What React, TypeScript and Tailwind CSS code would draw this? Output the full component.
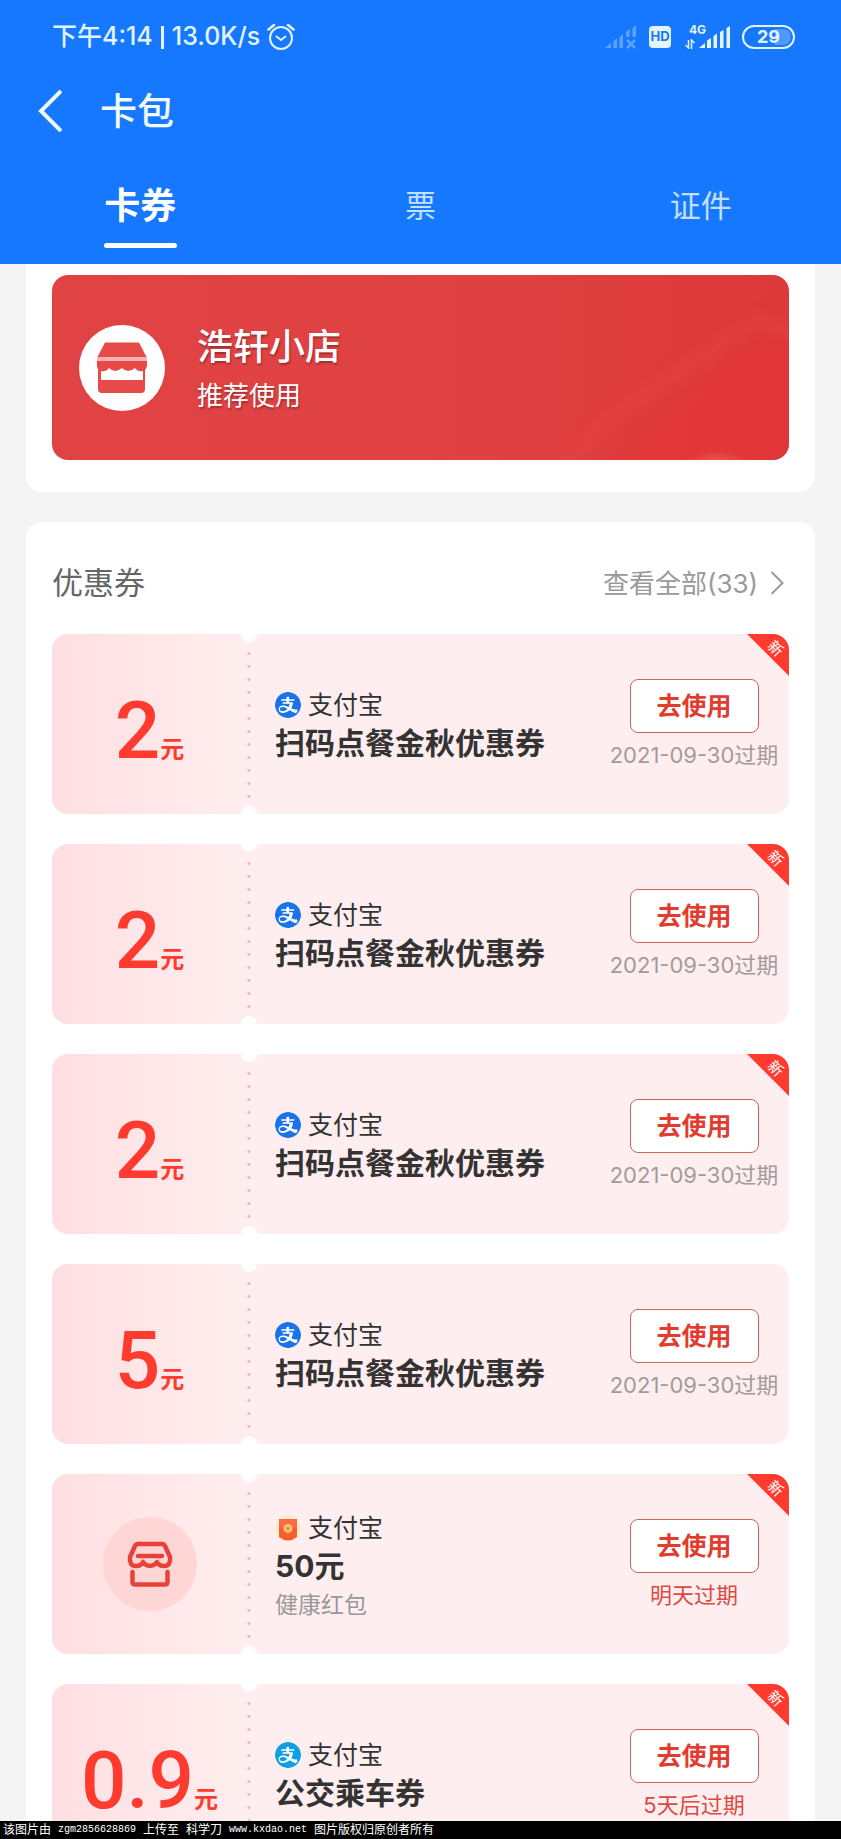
import type { ReactNode } from "react"
import { AiFillAlipayCircle } from "react-icons/ai"

type Brand = "alipay" | "packet" | "alipayLight"

interface Coupon {
  amount?: string
  brand: Brand
  title: string
  note?: string
  expires: string
  urgent?: boolean
  isNew?: boolean
}

const coupons: Coupon[] = [
  { amount: "2", brand: "alipay", title: "扫码点餐金秋优惠券", expires: "2021-09-30过期", isNew: true },
  { amount: "2", brand: "alipay", title: "扫码点餐金秋优惠券", expires: "2021-09-30过期", isNew: true },
  { amount: "2", brand: "alipay", title: "扫码点餐金秋优惠券", expires: "2021-09-30过期", isNew: true },
  { amount: "5", brand: "alipay", title: "扫码点餐金秋优惠券", expires: "2021-09-30过期" },
  { brand: "packet", title: "50元", note: "健康红包", expires: "明天过期", urgent: true, isNew: true },
  { amount: "0.9", brand: "alipayLight", title: "公交乘车券", expires: "5天后过期", urgent: true, isNew: true },
]

const tabs = ["卡券", "票", "证件"]

function AlarmIcon() {
  return (
    <svg width="28" height="28" viewBox="0 0 28 28" fill="none" stroke="currentColor" strokeWidth="2" strokeLinecap="round">
      <circle cx="14" cy="15" r="11" />
      <path d="M9.5 13.5 14 17l4.500-3.500" />
      <path d="M1.500 6.500 7 2M26.500 6.500 21 2" strokeWidth="2.500" />
    </svg>
  )
}

function NoSignalIcon() {
  return (
    <svg width="32" height="24" viewBox="0 0 32 24" className="opacity-35" fill="currentColor">
      <path d="M0 23 6 18V23ZM8.500 16 12 13V23H8.500ZM14.500 12 18 9V23H14.500ZM21 7 24.500 4V12H21ZM27.500 3 31 0V12H27.500Z" />
      <path d="M22 15 30 23M30 15 22 23" stroke="currentColor" strokeWidth="2.500" />
    </svg>
  )
}

function SignalIcon() {
  return (
    <svg width="31" height="23" viewBox="0 0 31 23" fill="currentColor">
      <path d="M0 22 6 17V22ZM8 14.500 12 12V22H8ZM14.500 10 18 7.500V22H14.500ZM21 6 24.500 4V22H21ZM27.500 2 31 0V22H27.500Z" />
    </svg>
  )
}

function StatusBar() {
  return (
    <div className="flex h-[74px] items-center justify-between pr-[46px] pl-[52px] text-[#e3f4ff]">
      <div className="flex items-center text-[25px] font-medium">
        <span>下午4:14</span>
        <span className="mx-2 h-[23px] w-[3px] bg-current" />
        <span className="mr-[7px]">13.0K/s</span>
        <AlarmIcon />
      </div>
      <div className="flex items-center">
        <NoSignalIcon />
        <span className="ml-3 flex h-[22px] w-[22px] items-center justify-center rounded bg-current">
          <span className="text-[13px] font-bold text-[#1677ff]">HD</span>
        </span>
        <div className="relative ml-[14px] flex h-6 w-[45px] items-end justify-end">
          <span className="absolute -top-[3px] left-1 text-xs leading-4 font-bold">4G</span>
          <svg width="10" height="10" viewBox="0 0 10 10" className="absolute bottom-0 left-0" fill="none" stroke="currentColor" strokeWidth="1.500">
            <path d="M3.500 1V9L0.500 6M6.500 10V1L9.500 4" />
          </svg>
          <SignalIcon />
        </div>
        <div className="relative ml-3 flex h-6 w-[53px] items-center justify-center rounded-full border-2 border-current">
          <span className="absolute right-[2px] h-4 w-4 rounded-r-full bg-white/25" />
          <span className="relative text-lg leading-5 font-bold">29</span>
        </div>
      </div>
    </div>
  )
}

function Header() {
  return (
    <header className="shrink-0 bg-[#1677ff]">
      <StatusBar />
      <div className="flex h-[74px] items-center gap-[38px] pl-[38px] text-[#f0fcff]">
        <button type="button" aria-label="返回">
          <svg width="24" height="42" viewBox="0 0 24 42" fill="none" stroke="currentColor" strokeWidth="4">
            <path d="M23 1 3 21 23 41" />
          </svg>
        </button>
        <h1 className="text-[37px] leading-none font-medium">卡包</h1>
      </div>
      <nav className="grid h-[116px] grid-cols-3">
        {tabs.map((tab, i) => (
          <button key={tab} type="button" className="relative flex items-center justify-center">
            <span className={i === 0 ? "text-4xl font-bold text-white" : "text-[31px] text-[#c2e0ff]"}>{tab}</span>
            {i === 0 && <span className="absolute bottom-4 h-[5px] w-[73px] rounded-full bg-white" />}
          </button>
        ))}
      </nav>
    </header>
  )
}

function ShopCard() {
  return (
    <section className="mx-[26px] rounded-b-2xl bg-white px-[26px] pt-[11px] pb-8">
      <a
        href="#shop"
        className="relative flex h-[185px] items-center gap-8 overflow-hidden rounded-2xl bg-gradient-to-r from-[#e14345] via-[#e04243] to-[#dd3939] pl-[27px]"
      >
        <svg className="absolute right-0 bottom-0" width="250" height="185" viewBox="0 0 250 185">
          <defs>
            <filter id="soften" x="-20%" y="-20%" width="140%" height="140%">
              <feGaussianBlur stdDeviation="7" />
            </filter>
            <radialGradient id="glow">
              <stop offset="0" stopColor="#ff7a60" stopOpacity="0.450" />
              <stop offset="1" stopColor="#ff7a60" stopOpacity="0" />
            </radialGradient>
          </defs>
          <path d="M60 200 140 125 218 62 270 70V200Z" fill="#e53437" opacity="0.500" filter="url(#soften)" />
          <path d="M20 190 90 130 150 92 218 46 260 60" fill="none" stroke="#ea4a48" strokeWidth="12" opacity="0.450" filter="url(#soften)" />
          <ellipse cx="178" cy="186" rx="30" ry="10" fill="url(#glow)" />
        </svg>
        <svg width="86" height="86" viewBox="0 0 86 86" className="relative">
          <circle cx="43" cy="43" r="43" fill="#fff" />
          <path d="M26 17.500H60L68 33H18Z" fill="#e84a4a" />
          <rect x="18" y="32" width="50" height="4" fill="#f8b4b4" />
          <path d="M18 36H68V41Q67 44 66 45V64Q66 68 62 68H23Q19 68 19 64V45L18 41Z" fill="#e84a4a" />
          <path d="M22 46Q27 47 30 43Q36 49 43 43Q49 49 56 43Q59 47 64 46V55H22Z" fill="#fff" />
        </svg>
        <div className="relative pt-1 text-white text-shadow-[1px_2px_2px_rgb(0_0_0/0.300)]">
          <h2 className="text-4xl leading-[52px] font-medium">浩轩小店</h2>
          <p className="text-[26px] leading-[46px]">推荐使用</p>
        </div>
      </a>
    </section>
  )
}

function BrandIcon({ brand }: { brand: Brand }) {
  if (brand === "packet") {
    return (
      <svg width="26" height="26" viewBox="0 0 26 26">
        <circle cx="13" cy="13" r="13" fill="#ffe9cf" />
        <path d="M4 4H22V22Q13 29 4 22Z" fill="#f4602f" />
        <path d="M4 4H22V12Q13 17 4 12Z" fill="#fb6a45" />
        <circle cx="13" cy="13.500" r="4.500" fill="#fbc06a" />
        <path d="M11 12.500H15L13 15.500Z" fill="#d98228" />
      </svg>
    )
  }
  return (
    <span className="flex h-[26px] w-[26px] items-center justify-center overflow-hidden rounded-full bg-white">
      <AiFillAlipayCircle size={30} className={`shrink-0 ${brand === "alipay" ? "text-[#1a73e8]" : "text-[#109fe0]"}`} />
    </span>
  )
}

function ShopOutline() {
  return (
    <div className="flex h-[94px] w-[94px] items-center justify-center rounded-full bg-[#ffd6d6]">
      <svg width="46" height="46" viewBox="0 0 46 46" fill="none" stroke="#e8413a" strokeWidth="4.500" strokeLinecap="round" strokeLinejoin="round">
        <path d="M11 3H35Q37 3 38 5L43 16Q44 25 37 25Q32 25 30 21Q27 25 23 25Q19 25 16 21Q14 25 9 25Q2 25 3 16L8 5Q9 3 11 3Z" />
        <path d="M11 15H35" />
        <path d="M5.500 31V41Q5.500 43.500 8 43.500H38Q40.500 43.500 40.500 41V31" />
      </svg>
    </div>
  )
}

function NewBadge() {
  return (
    <div className="absolute top-0 right-0 h-[42px] w-[42px] bg-[#ff3b30] [clip-path:polygon(0_0,100%_0,100%_100%)]">
      <span className="absolute top-1 right-[3px] flex h-5 w-5 rotate-45 items-center justify-center text-[15px] leading-none text-white">
        新
      </span>
    </div>
  )
}

function Notch({ className }: { className: string }) {
  return <span className={`absolute left-[189px] h-4 w-4 rounded-full bg-white ${className}`} />
}

function Amount({ children }: { children: ReactNode }) {
  return (
    <p className="flex items-baseline pt-4 text-[#ff3b30]">
      <span className="font-['Roboto',sans-serif] text-[80px] leading-[64px] font-medium">{children}</span>
      <span className="text-2xl leading-8 font-bold">元</span>
    </p>
  )
}

function CouponCard({ coupon }: { coupon: Coupon }) {
  return (
    <li className="relative flex h-[180px] shrink-0 overflow-hidden rounded-2xl bg-[#ffeeef]">
      <div className="flex w-[195px] shrink-0 items-center justify-center bg-gradient-to-r from-[#ffdfe1] to-[#ffeeef]">
        {coupon.amount ? <Amount>{coupon.amount}</Amount> : <ShopOutline />}
      </div>
      <Notch className="-top-2" />
      <Notch className="-bottom-2" />
      <div className="my-[13px] w-1 shrink-0 bg-[radial-gradient(circle,#f2b5ba_1px,transparent_2px)] bg-[length:4px_13px] bg-repeat-y" />
      <div className={`flex flex-1 flex-col justify-center pl-6 whitespace-nowrap ${coupon.note ? "pt-1" : ""}`}>
        <p className="flex items-center gap-[7px] text-[25px] leading-[38px] text-[#333]">
          <BrandIcon brand={coupon.brand} />
          支付宝
        </p>
        <h3 className="text-[30px] leading-[39px] font-bold text-[#333]">{coupon.title}</h3>
        {coupon.note && <p className="text-[23px] leading-[38px] text-[#999]">{coupon.note}</p>}
      </div>
      <div className="flex w-[190px] shrink-0 flex-col items-center pt-[45px] whitespace-nowrap">
        <button type="button" className="h-[54px] w-[129px] rounded-lg border border-[#d0625c] bg-white pt-[2px] text-[25px] font-bold text-[#e23c30]">
          去使用
        </button>
        <p className={`mt-1 text-[22px] leading-9 ${coupon.urgent ? "text-[#dc4a42]" : "text-[#a39a9b]"}`}>{coupon.expires}</p>
      </div>
      {coupon.isNew && <NewBadge />}
    </li>
  )
}

function CouponSection() {
  return (
    <section className="mx-[26px] mt-[30px] rounded-t-2xl bg-white px-[26px]">
      <div className="flex h-[112px] items-center justify-between pt-[10px]">
        <h2 className="text-[31px] text-[#666]">优惠券</h2>
        <a href="#all" className="flex items-center gap-3 pr-[5px] text-[26px] text-[#999]">
          查看全部(33)
          <svg width="14" height="24" viewBox="0 0 14 24" fill="none" stroke="currentColor" strokeWidth="2">
            <path d="M1.500 1 12.500 12 1.500 23" />
          </svg>
        </a>
      </div>
      <ul className="flex flex-col gap-[30px]">
        {coupons.map((coupon, i) => (
          <CouponCard key={i} coupon={coupon} />
        ))}
      </ul>
    </section>
  )
}

export default function App() {
  return (
    <div className="flex h-screen flex-col bg-[#f4f4f4] font-['Inter','Noto_Sans_CJK_SC',sans-serif]">
      <Header />
      <main className="min-h-0 flex-1 overflow-hidden">
        <ShopCard />
        <CouponSection />
      </main>
      <footer className="flex h-[18px] shrink-0 items-center gap-[7px] bg-black pl-[3px] text-xs leading-none whitespace-nowrap text-white">
        <span>该图片由</span>
        <span className="font-['Liberation_Mono',monospace] text-[10px]">zgm2856628869</span>
        <span>上传至</span>
        <span>科学刀</span>
        <span className="font-['Liberation_Mono',monospace] text-[10px]">www.kxdao.net</span>
        <span>图片版权归原创者所有</span>
      </footer>
    </div>
  )
}
